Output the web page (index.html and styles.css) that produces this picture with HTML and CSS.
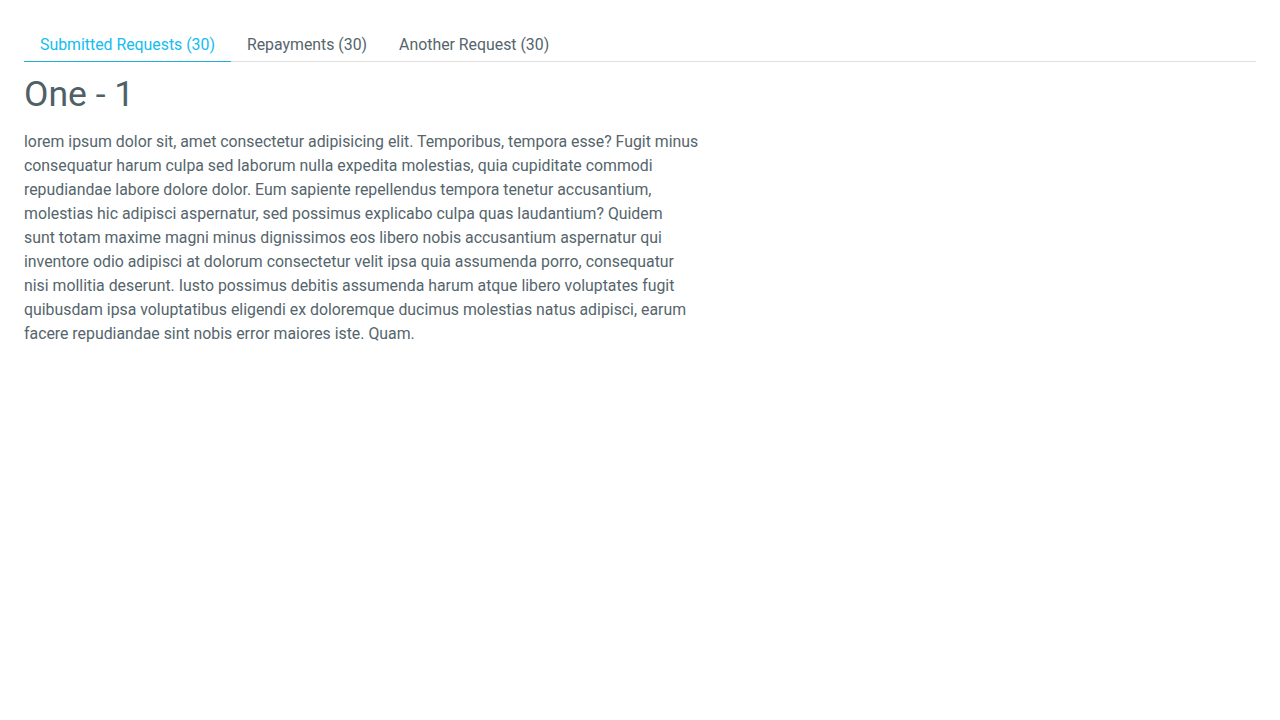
FILE: index.html
```html
<!DOCTYPE html>
<html>
<head>
<meta charset="utf-8">
<link rel="stylesheet" href="styles.css">
</head>
<body>
<div class="page">
  <nav class="tabs">
    <a class="tab active">Submitted Requests (30)</a>
    <a class="tab">Repayments (30)</a>
    <a class="tab">Another Request (30)</a>
  </nav>
  <section class="content">
    <h1 class="title">One - 1</h1>
    <p class="text">lorem ipsum dolor sit, amet consectetur adipisicing elit. Temporibus, tempora esse? Fugit minus<br>
consequatur harum culpa sed laborum nulla expedita molestias, quia cupiditate commodi<br>
repudiandae labore dolore dolor. Eum sapiente repellendus tempora tenetur accusantium,<br>
molestias hic adipisci aspernatur, sed possimus explicabo culpa quas laudantium? Quidem<br>
sunt totam maxime magni minus dignissimos eos libero nobis accusantium aspernatur qui<br>
inventore odio adipisci at dolorum consectetur velit ipsa quia assumenda porro, consequatur<br>
nisi mollitia deserunt. Iusto possimus debitis assumenda harum atque libero voluptates fugit<br>
quibusdam ipsa voluptatibus eligendi ex doloremque ducimus molestias natus adipisci, earum<br>
facere repudiandae sint nobis error maiores iste. Quam.</p>
  </section>
</div>
</body>
</html>
```

FILE: styles.css
```css
html, body {
  margin: 0;
  padding: 0;
  background: #ffffff;
}
body {
  font-family: Roboto, "Liberation Sans", sans-serif;
  color: #55656c;
}
.page {
  padding: 28px 24px 24px;
}
.tabs {
  display: flex;
  border-bottom: 1px solid #e0e0e0;
}
.tab {
  display: block;
  padding: 6px 16px 6px;
  font-size: 15.85px;
  line-height: 21px;
  color: #55656c;
  margin-bottom: -1px;
  border-bottom: 1px solid transparent;
}
.tab.active {
  color: #12bdf0;
  border-bottom-color: #1fb0d8;
}
.content {
  padding-top: 10px;
}
.title {
  margin: 0;
  font-size: 35.5px;
  font-weight: 400;
  line-height: 44px;
  color: #4f6067;
}
.text {
  margin: 14px 0 0;
  max-width: 720px;
  font-size: 15.85px;
  line-height: 24px;
  color: #55656c;
}
```
